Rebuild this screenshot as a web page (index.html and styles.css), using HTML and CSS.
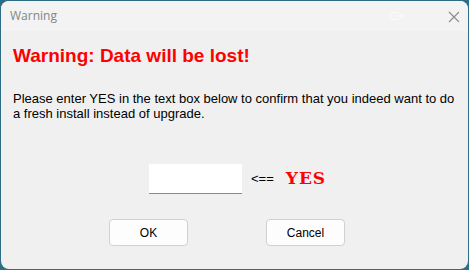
FILE: index.html
```html
<!DOCTYPE html>
<html>
<head>
<meta charset="utf-8">
<link rel="stylesheet" href="styles.css">
</head>
<body>
<div class="window">
  <div class="titlebar">
    <span class="title">Warning</span>
    <svg class="ghost" width="16" height="10" viewBox="0 0 16 10"><path d="M1.5 1.5h9M1.5 1.5v7h9M6 5h8M12 3l2 2-2 2" fill="none" stroke="#fbfbfb" stroke-width="1"/></svg>
    <svg class="close" width="12" height="12" viewBox="0 0 12 12"><path d="M1 1L11 11M11 1L1 11" stroke="#8a8a8a" stroke-width="1.1" fill="none"/></svg>
  </div>
  <div class="content">
    <h1 class="heading">Warning: Data will be lost!</h1>
    <p class="msg">Please enter YES in the text box below to confirm that you indeed want to do<br>a fresh install instead of upgrade.</p>
    <div class="entry">
      <div class="textbox"></div>
      <span class="arrow">&lt;==</span>
      <span class="yes">YES</span>
    </div>
    <div class="buttons">
      <div class="btn">OK</div>
      <div class="btn">Cancel</div>
    </div>
  </div>
</div>
</body>
</html>
```
FILE: styles.css
```css
html, body { margin: 0; padding: 0; }
body {
  width: 469px; height: 270px;
  background: #2d6e86;
  padding: 1px;
  box-sizing: border-box;
  overflow: hidden;
}
.window {
  width: 467px; height: 268px;
  background: #f0f0f0;
  border-radius: 8px;
  overflow: hidden;
  display: flex; flex-direction: column;
}
.titlebar {
  height: 30px;
  background: #f3f3f3;
  display: flex; align-items: center;
  position: relative;
  flex: none;
}
.title {
  font-family: "Open Sans", "Noto Sans", sans-serif;
  font-size: 12px;
  color: #858585;
  margin-left: 9px;
  margin-top: -1px;
}
.ghost { position: absolute; left: 388px; top: 10px; }
.close { position: absolute; left: 447px; top: 10px; }
.content {
  flex: 1;
  padding: 0 12px;
  font-family: "Liberation Sans", Arial, sans-serif;
}
.heading {
  margin: 14px 0 0 0;
  font-size: 19px;
  font-weight: bold;
  color: #ff0000;
  line-height: 22px;
}
.msg {
  margin: 25px 0 0 0;
  font-size: 13px;
  line-height: 14.5px;
  color: #000;
  white-space: nowrap;
}
.entry {
  display: flex; align-items: center;
  margin-top: 43px;
  padding-left: 136px;
}
.textbox {
  width: 93px; height: 29px;
  background: #fff;
  border-bottom: 1px solid #8a8a8a;
}
.arrow {
  font-family: "Liberation Sans", Arial, sans-serif;
  font-size: 13px;
  margin-left: 9px;
  margin-top: -2px;
}
.yes {
  font-family: "DejaVu Serif", "Liberation Serif", serif;
  font-weight: bold;
  font-size: 17px;
  letter-spacing: 1px;
  color: #ff0000;
  margin-left: 12px;
  margin-top: -2px;
}
.buttons {
  display: flex;
  margin-top: 25px;
  padding-left: 96px;
  gap: 78px;
}
.btn {
  width: 77px; height: 25px;
  background: #fdfdfd;
  border: 1px solid #d0d0d0;
  border-radius: 4px;
  display: flex; align-items: center; justify-content: center;
  font-size: 12px;
  color: #000;
}
```
